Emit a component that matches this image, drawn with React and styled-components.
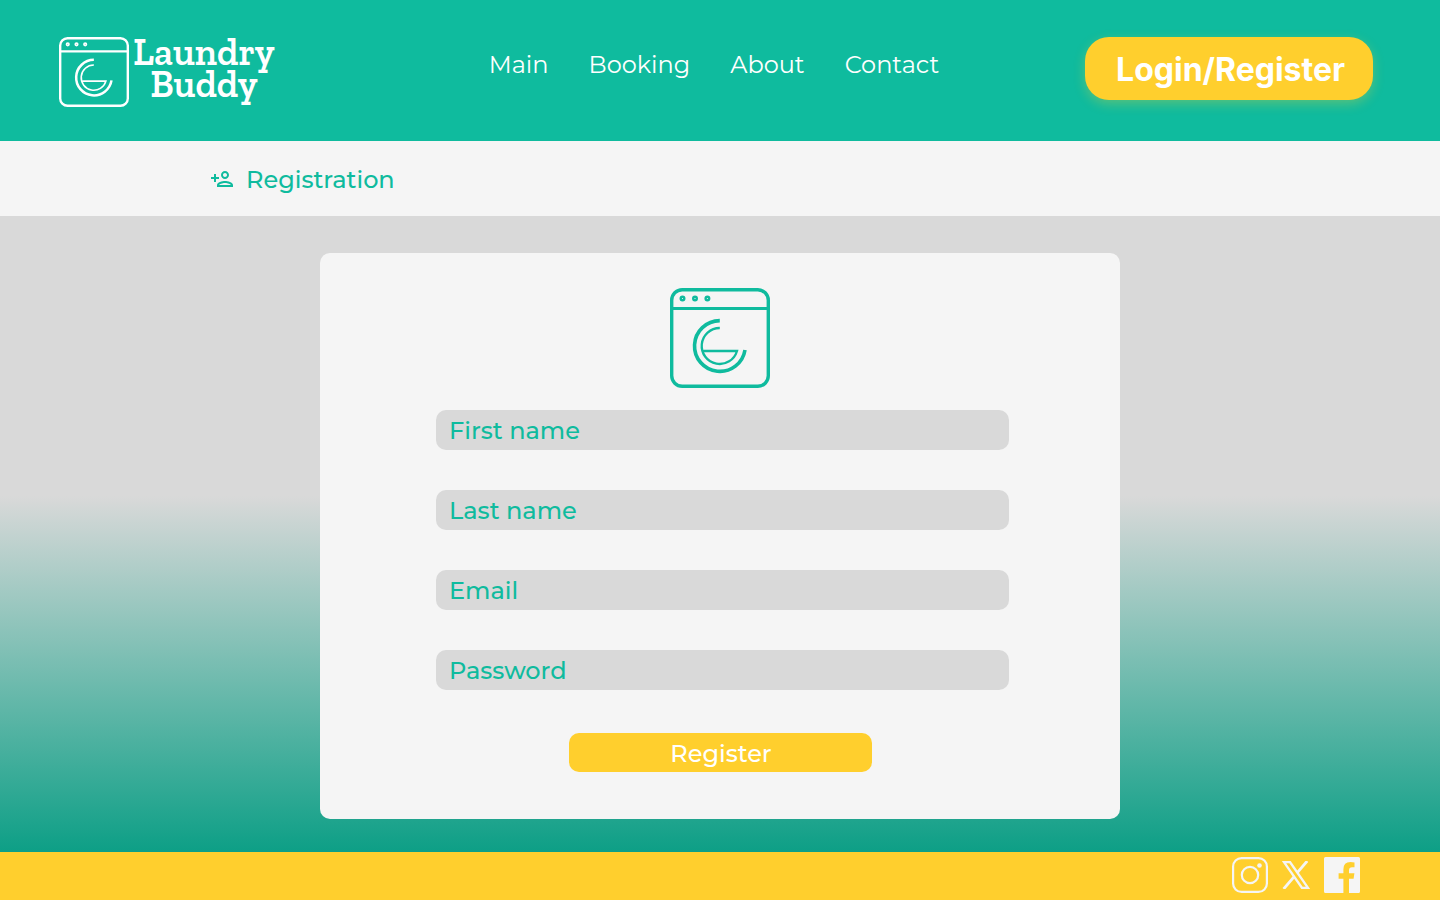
import React from "react";
import styled, { createGlobalStyle } from "styled-components";
import { MdOutlinePersonAdd } from "react-icons/md";

const teal = "#0fbb9e";
const yellow = "#ffcf2d";
const paper = "#f5f5f5";
const grey = "#d9d9d9";

const GlobalStyle = createGlobalStyle`
  *, *::before, *::after { box-sizing: border-box; }
  body { margin: 0; font-family: Montserrat, Inter, sans-serif; }
  button, input { font: inherit; }
`;

const Page = styled.div`
  min-height: 100vh;
  display: flex;
  flex-direction: column;
`;

const Header = styled.header`
  display: grid;
  grid-template-columns: 1fr auto 1fr;
  align-items: start;
  padding: 37px 67px 34px 59px;
  background: ${teal};
  color: #fff;
`;

const Brand = styled.a`
  display: flex;
  align-items: center;
  gap: 4px;
  height: 70px;
  color: inherit;
  text-decoration: none;
`;

const BrandName = styled.span`
  display: grid;
  padding-bottom: 8px;
  font-family: "Zilla Slab", Rokkitt, "DejaVu Serif", serif;
  font-size: 38px;
  font-weight: 600;
  line-height: 32px;
  text-align: center;
`;

const Nav = styled.nav`
  display: flex;
  gap: 40px;
  padding: 12px 4px 0 0;
`;

const NavLink = styled.a`
  color: inherit;
  font-size: 24px;
  font-weight: 400;
  line-height: 32px;
  text-decoration: none;
`;

const LoginButton = styled.button`
  justify-self: end;
  padding: 13px 28px 10px 31px;
  border: 0;
  border-radius: 24px;
  background: ${yellow};
  box-shadow: 0 4px 12px rgba(255, 207, 45, 0.3);
  color: #fff;
  font-family: Inter, sans-serif;
  font-size: 32px;
  font-weight: 700;
  line-height: 40px;
  cursor: pointer;
`;

const TitleBar = styled.div`
  display: flex;
  align-items: center;
  gap: 12px;
  height: 75px;
  padding: 0 210px;
  background: ${paper};
  color: ${teal};
`;

const Title = styled.h1`
  margin: 0;
  padding-top: 2px;
  font-size: 24px;
  font-weight: 500;
  line-height: 32px;
`;

const Main = styled.main`
  flex: 1;
  padding: 37px 24px 33px;
  background: linear-gradient(${grey} 44%, #0d9f86 100%);
`;

const Card = styled.form`
  display: flex;
  flex-direction: column;
  align-items: center;
  max-width: 800px;
  margin: 0 auto;
  padding: 35px 0 47px;
  border-radius: 10px;
  background: ${paper};
  color: ${teal};
`;

const Fields = styled.div`
  display: grid;
  gap: 40px;
  width: 100%;
  padding: 22px 111px 43px 116px;
`;

const Field = styled.input`
  width: 100%;
  height: 40px;
  padding: 0 13px;
  border: 0;
  border-radius: 10px;
  background: ${grey};
  color: ${teal};
  font-size: 24px;
  font-weight: 500;

  &::placeholder {
    color: ${teal};
    opacity: 1;
  }
`;

const RegisterButton = styled.button`
  width: 303px;
  height: 39px;
  padding: 2px 0 0 2px;
  border: 0;
  border-radius: 10px;
  background: ${yellow};
  color: #fff;
  font-size: 24px;
  font-weight: 500;
  cursor: pointer;
`;

const Footer = styled.footer`
  display: flex;
  justify-content: flex-end;
  align-items: center;
  gap: 14px;
  height: 48px;
  padding: 0 80px 2px;
  background: ${yellow};
`;

const SocialLink = styled.a`
  display: flex;
  color: ${paper};
`;

const fields = [
  { name: "firstName", label: "First name", type: "text" },
  { name: "lastName", label: "Last name", type: "text" },
  { name: "email", label: "Email", type: "email" },
  { name: "password", label: "Password", type: "password" },
];

function WasherLogo({ size }) {
  return (
    <svg width={size} height={size} viewBox="0 0 100 100" fill="none" stroke="currentColor" aria-hidden="true">
      <rect x="1.7" y="1.7" width="96.6" height="96.6" rx="10.5" strokeWidth="3.4" />
      <path d="M2 20.5H98" strokeWidth="3.2" />
      <circle cx="12.5" cy="10.5" r="1.8" strokeWidth="2.4" />
      <circle cx="25" cy="10.5" r="1.8" strokeWidth="2.4" />
      <circle cx="37.4" cy="10.5" r="1.8" strokeWidth="2.4" />
      <path d="M49.8 32.6A25.4 25.4 0 1 0 75 62" strokeWidth="3.6" />
      <path d="M49.8 40A18 18 0 1 0 67 63H33.5" strokeWidth="2.3" />
    </svg>
  );
}

function InstagramIcon() {
  return (
    <svg width="36" height="36" viewBox="0 0 36 36" fill="none" stroke="currentColor" strokeWidth="2.2" aria-hidden="true">
      <rect x="1.1" y="1.1" width="33.8" height="33.8" rx="8.5" />
      <circle cx="18" cy="18" r="8.2" />
      <circle cx="27.5" cy="8.5" r="2.3" fill="currentColor" stroke="none" />
    </svg>
  );
}

function XIcon() {
  return (
    <svg width="28" height="28" viewBox="0 0 28 28" fill="none" stroke="currentColor" aria-hidden="true">
      <path d="M2 1.1H8L26 26.9H20Z" strokeWidth="2.4" />
      <path d="M25.2 0L15.3 11.6M12 15.8L1.6 28" strokeWidth="2.8" />
    </svg>
  );
}

function FacebookIcon() {
  return (
    <svg width="36" height="36" viewBox="0 0 36 36" fill="currentColor" aria-hidden="true">
      <path d="M1.5 0H34.5Q36 0 36 1.5V34.5Q36 36 34.5 36H25V21.8H29.6L30.4 16.3H25V13.2Q25 10.3 28 10.3H30.5V5.4Q28.5 5 26.5 5Q19.4 5 19.4 12.3V16.3H14.6V21.8H19.4V36H1.5Q0 36 0 34.5V1.5Q0 0 1.5 0Z" />
    </svg>
  );
}

export default function App() {
  return (
    <Page>
      <GlobalStyle />
      <Header>
        <Brand href="#main">
          <WasherLogo size={70} />
          <BrandName>
            <span>Laundry</span>
            <span>Buddy</span>
          </BrandName>
        </Brand>
        <Nav>
          {["Main", "Booking", "About", "Contact"].map((item) => (
            <NavLink key={item} href={`#${item.toLowerCase()}`}>
              {item}
            </NavLink>
          ))}
        </Nav>
        <LoginButton type="button">Login/Register</LoginButton>
      </Header>
      <TitleBar>
        <MdOutlinePersonAdd size={24} aria-hidden="true" />
        <Title>Registration</Title>
      </TitleBar>
      <Main>
        <Card onSubmit={(event) => event.preventDefault()}>
          <WasherLogo size={100} />
          <Fields>
            {fields.map(({ name, label, type }) => (
              <Field key={name} name={name} type={type} placeholder={label} aria-label={label} />
            ))}
          </Fields>
          <RegisterButton type="submit">Register</RegisterButton>
        </Card>
      </Main>
      <Footer>
        <SocialLink href="#instagram" aria-label="Instagram">
          <InstagramIcon />
        </SocialLink>
        <SocialLink href="#x" aria-label="X">
          <XIcon />
        </SocialLink>
        <SocialLink href="#facebook" aria-label="Facebook">
          <FacebookIcon />
        </SocialLink>
      </Footer>
    </Page>
  );
}
